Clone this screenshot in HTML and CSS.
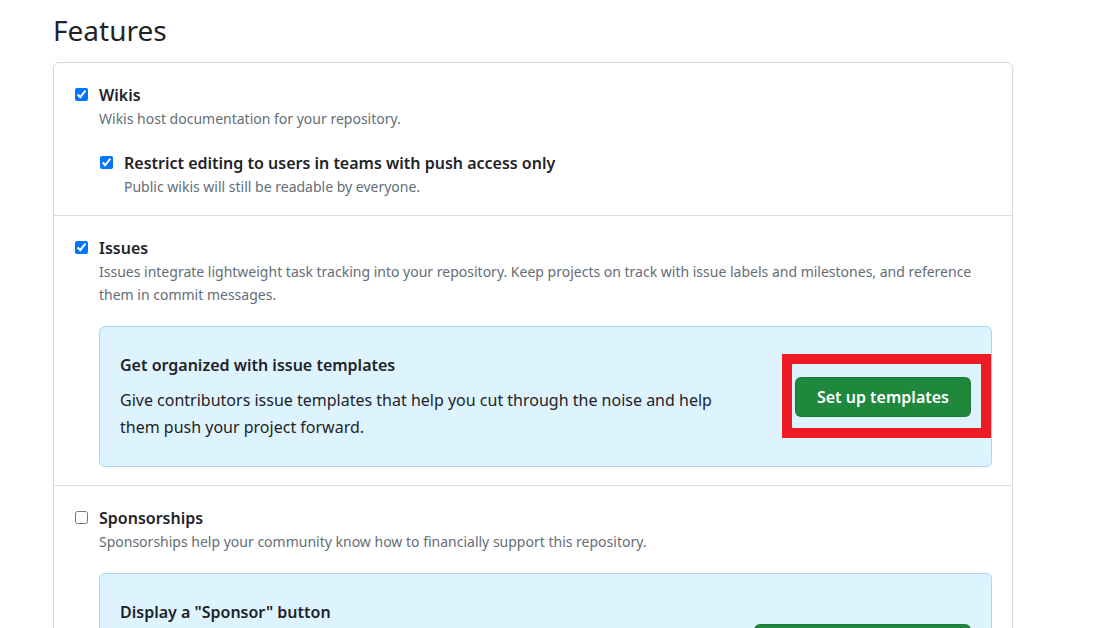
FILE: index.html
```html
<!DOCTYPE html>
<html lang="en">
<head>
<meta charset="utf-8">
<title>Features</title>
<link rel="stylesheet" href="styles.css">
</head>
<body>
<main class="page">
  <h2 class="page-title">Features</h2>
  <div class="box">
    <section class="box-row">
      <div class="check">
        <input type="checkbox" class="cb" checked>
        <div class="check-body">
          <div class="check-label">Wikis</div>
          <div class="check-note">Wikis host documentation for your repository.</div>
          <div class="check nested">
            <input type="checkbox" class="cb" checked>
            <div class="check-body">
              <div class="check-label">Restrict editing to users in teams with push access only</div>
              <div class="check-note">Public wikis will still be readable by everyone.</div>
            </div>
          </div>
        </div>
      </div>
    </section>
    <section class="box-row">
      <div class="check">
        <input type="checkbox" class="cb" checked>
        <div class="check-body">
          <div class="check-label">Issues</div>
          <div class="check-note">Issues integrate lightweight task tracking into your repository. Keep projects on track with issue labels and milestones, and reference them in commit messages.</div>
          <div class="flash">
            <div class="flash-text">
              <div class="flash-title">Get organized with issue templates</div>
              <p class="flash-body">Give contributors issue templates that help you cut through the noise and help them push your project forward.</p>
            </div>
            <div class="btn-wrap annotated">
              <button class="btn-primary">Set up templates</button>
            </div>
          </div>
        </div>
      </div>
    </section>
    <section class="box-row">
      <div class="check">
        <input type="checkbox" class="cb">
        <div class="check-body">
          <div class="check-label">Sponsorships</div>
          <div class="check-note">Sponsorships help your community know how to financially support this repository.</div>
          <div class="flash">
            <div class="flash-text">
              <div class="flash-title">Display a "Sponsor" button</div>
              <p class="flash-body">Add links to GitHub Sponsors or third-party methods your repository accepts for financial contributions to your project.</p>
            </div>
            <div class="btn-wrap">
              <button class="btn-primary">Set up sponsor button</button>
            </div>
          </div>
        </div>
      </div>
    </section>
  </div>
</main>
</body>
</html>
```

FILE: styles.css
```css
html, body {
  margin: 0;
  padding: 0;
  background: #ffffff;
}
body {
  font-family: "Segoe UI", "Noto Sans", "Liberation Sans", sans-serif;
  color: #1f2328;
}
.page {
  padding: 12px 0 0 53px;
  width: 960px;
}
.page-title {
  margin: 0 0 14px 0;
  font-size: 28px;
  font-weight: 400;
  line-height: 36px;
  color: #1f2328;
}
.box {
  border: 1px solid #d0d7de;
  border-radius: 6px;
}
.box-row {
  padding: 20px 20px 18px 21px;
  border-top: 1px solid #d8dee4;
}
.box-row:first-child {
  border-top: none;
  padding-bottom: 17px;
}
.check {
  display: flex;
  align-items: flex-start;
}
.cb {
  width: 13px;
  height: 13px;
  margin: 5px 11px 0 0;
  flex: none;
}
.check-body {
  flex: 1;
  min-width: 0;
}
.check-label {
  font-size: 16px;
  font-weight: 600;
  line-height: 24px;
}
.check-note {
  font-size: 14px;
  line-height: 23px;
  color: #656d76;
}
.nested {
  margin-top: 21px;
  margin-left: 1px;
}
.flash {
  display: flex;
  align-items: center;
  margin-top: 20px;
  padding: 26px 20px 25px 20px;
  background: #ddf4ff;
  border: 1px solid #a5d5fb;
  border-radius: 6px;
}
.flash-text {
  flex: 1;
  min-width: 0;
  margin-right: 60px;
}
.flash-title {
  font-size: 16px;
  font-weight: 600;
  line-height: 24px;
}
.flash-body {
  margin: 10px 0 0 0;
  font-size: 16px;
  line-height: 27px;
}
.btn-wrap {
  position: relative;
  flex: none;
}
.btn-primary {
  font-family: inherit;
  font-size: 16px;
  font-weight: 600;
  color: #ffffff;
  background: #1f883d;
  border: 1px solid rgba(31, 35, 40, 0.15);
  border-radius: 6px;
  height: 40px;
  padding: 0 21px;
  line-height: 38px;
}
.annotated::after {
  content: "";
  position: absolute;
  top: -23px;
  right: -20px;
  bottom: -21px;
  left: -13px;
  border: 10px solid #ed1c24;
  pointer-events: none;
}
```
